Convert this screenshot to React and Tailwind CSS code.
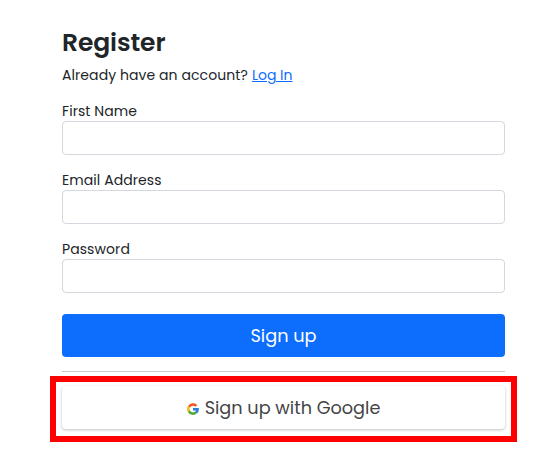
import { useState } from 'react';

const FIELDS = [
  { id: 'firstName', label: 'First Name', type: 'text' },
  { id: 'email', label: 'Email Address', type: 'email' },
  { id: 'password', label: 'Password', type: 'password' },
];

function GoogleIcon() {
  return (
    <svg viewBox="0 0 48 48" className="mt-0.5 size-3 shrink-0" fill="none" strokeWidth="10" aria-hidden="true">
      <path stroke="#F4511E" d="M8 15.5A18.5 18.5 0 0 1 37.5 11.5" />
      <path stroke="#FBB81A" d="M8 14.5a18.5 18.5 0 0 0 0 19" />
      <path stroke="#55A82D" d="M7.5 32.5a18.5 18.5 0 0 0 28.5 5.5" />
      <path stroke="#2B7FD4" d="M24 24.5h18.5c0 5.5-2.5 10.500-6.500 13.500" />
    </svg>
  );
}

function App() {
  const [values, setValues] = useState({ firstName: '', email: '', password: '' });

  const handleChange = (e) => setValues({ ...values, [e.target.name]: e.target.value });

  return (
    <div className="h-[464px] bg-white pl-[62px] pt-[27px] font-['Poppins','Inter',sans-serif] text-[14px] text-[#212529]">
      <form className="w-[443px]" onSubmit={(e) => e.preventDefault()}>
        <h1 className="h-8 whitespace-nowrap text-[25px] font-semibold leading-8 tracking-[-0.1px]">Register</h1>

        <p className="mt-1.5 flex h-5 gap-1 whitespace-nowrap leading-5">
          <span className="tracking-[0.08px]">Already have an account?</span>
          <a href="#login" className="text-[#0d6efd] underline">Log In</a>
        </p>

        <div className="mt-4 flex flex-col gap-[15px]">
          {FIELDS.map((field) => (
            <div key={field.id}>
              <label htmlFor={field.id} className="block h-5 whitespace-nowrap leading-5 tracking-[0.08px]">
                {field.label}
              </label>
              <input
                id={field.id}
                name={field.id}
                type={field.type}
                value={values[field.id]}
                onChange={handleChange}
                className="block h-[34px] w-full rounded-[4px] border border-[#d3d8de] bg-white px-3 outline-none"
              />
            </div>
          ))}
        </div>

        <button type="submit" className="mt-[21px] block h-[43px] w-full rounded-[4px] bg-[#0d6efd] text-[17.7px] leading-[43px] text-white">
          Sign up
        </button>

        <hr className="mt-3.5 border-t border-[#c8c9ca]" />

        {/* Highlighted Google option */}
        <div className="-ml-3 mt-1 h-[66px] w-[467px] border-[6px] border-[#ff0000] px-1.5 pt-1">
          <button
            type="button"
            className="flex h-[43px] w-full items-center justify-center gap-1.5 rounded-[4px] bg-white text-[17.7px] text-[#444] shadow-[0_1px_3px_rgba(0,0,0,0.25)]"
          >
            <GoogleIcon />
            <span className="leading-[43px]">Sign up with Google</span>
          </button>
        </div>
      </form>
    </div>
  );
}

export default App;
